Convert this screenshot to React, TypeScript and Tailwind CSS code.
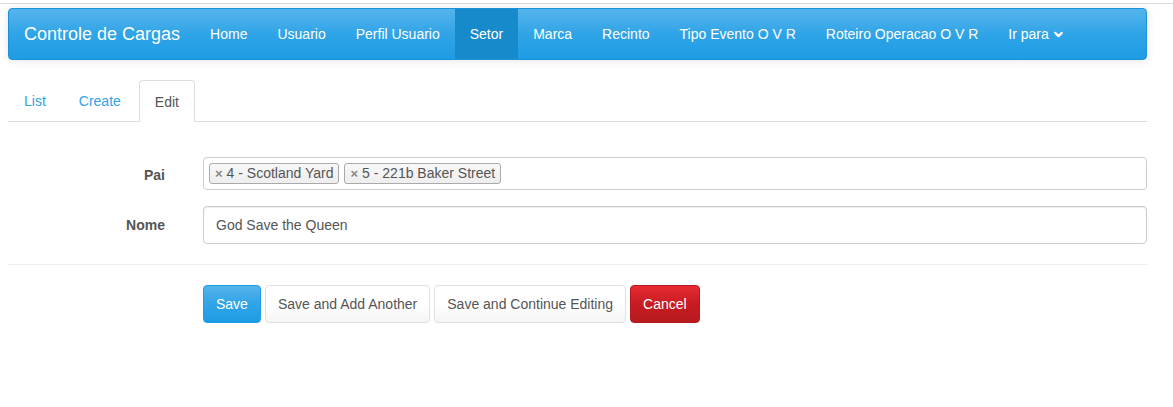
import { ChevronDown } from "lucide-react";

const navItems = [
  "Home",
  "Usuario",
  "Perfil Usuario",
  "Setor",
  "Marca",
  "Recinto",
  "Tipo Evento O V R",
  "Roteiro Operacao O V R",
];

function Tag({ label }: { label: string }) {
  return (
    <span className="flex items-center h-[21px] pl-[5px] pr-[5px] mr-[5px] pb-px border border-[#aaa] rounded-[3px] bg-gradient-to-b from-[#f8f8f8] to-[#eee] text-[14px] text-[#555] leading-none">
      <span className="text-[#888] text-[13px] font-bold mr-[4px]">×</span>
      {label}
    </span>
  );
}

function App() {
  return (
    <div className="min-h-screen bg-white font-['Liberation_Sans',Arial,sans-serif] text-[14px] text-[#555]">
      <div className="h-[3px]" />
      <div className="h-px bg-[#ddd]" />
      <div className="pt-[4px] px-2 w-[1155px]">
        {/* Navbar */}
        <nav className="flex items-stretch h-[52px] rounded-[4px] border border-[#1a92d8] bg-gradient-to-b from-[#54b4eb] via-[#2fa4e7] to-[#1d9ce5] shadow-[0_1px_10px_rgba(0,0,0,0.1)] text-white">
          <div className="flex items-center pl-[15px] pr-[15px] text-[18px]">Controle de Cargas</div>
          {navItems.map((item) => (
            <div
              key={item}
              className={
                item === "Setor"
                  ? "flex items-center px-[15px] bg-[#178acc]"
                  : "flex items-center px-[15px]"
              }
            >
              {item}
            </div>
          ))}
          <div className="flex items-center px-[15px]">
            Ir para
            <ChevronDown size={13} strokeWidth={4} className="ml-[3px]" />
          </div>
        </nav>

        {/* Tabs */}
        <div className="flex mt-[20px] h-[42px] pl-px border-b border-[#ddd]">
          <div className="flex items-center pt-[2px] px-[15px] mr-[3px] text-[#2fa4e7]">List</div>
          <div className="flex items-center pt-[2px] px-[15px] mr-[3px] text-[#2fa4e7]">Create</div>
          <div className="flex items-center pt-[2px] px-[15px] border border-[#ddd] border-b-white rounded-t-[4px] -mb-px bg-white text-[#555]">
            Edit
          </div>
        </div>

        {/* Form */}
        <div className="mt-[35px]">
          <div className="flex items-center">
            <div className="w-[157px] text-right font-bold mt-[3px]">Pai</div>
            <div className="ml-[38px] flex-1 h-[33px] border border-[#ccc] rounded-[4px] flex items-center pl-[5px]">
              <Tag label="4 - Scotland Yard" />
              <Tag label="5 - 221b Baker Street" />
            </div>
          </div>
          <div className="flex items-center mt-[16px]">
            <div className="w-[157px] text-right font-bold">Nome</div>
            <div className="ml-[38px] flex-1 h-[38px] border border-[#ccc] rounded-[4px] flex items-center px-[12px] shadow-[inset_0_1px_1px_rgba(0,0,0,0.075)]">
              God Save the Queen
            </div>
          </div>
          <div className="h-px bg-[#eee] mt-[20px]" />
          <div className="flex ml-[195px] mt-[20px] gap-[4px]">
            <button className="h-[38px] px-[12px] rounded-[4px] border border-[#1d9ce5] bg-gradient-to-b from-[#54b4eb] via-[#2fa4e7] to-[#1d9ce5] text-white">
              Save
            </button>
            <button className="h-[38px] px-[12px] rounded-[4px] border border-[#e0e0e0] bg-gradient-to-b from-white via-white to-[#f5f5f5] text-[#555]">
              Save and Add Another
            </button>
            <button className="h-[38px] px-[12px] rounded-[4px] border border-[#e0e0e0] bg-gradient-to-b from-white via-white to-[#f5f5f5] text-[#555]">
              Save and Continue Editing
            </button>
            <button className="h-[38px] px-[12px] rounded-[4px] border border-[#b61a1f] bg-gradient-to-b from-[#e72b33] via-[#c71c22] to-[#b61a1f] text-white">
              Cancel
            </button>
          </div>
        </div>
      </div>
    </div>
  );
}

export default App;
